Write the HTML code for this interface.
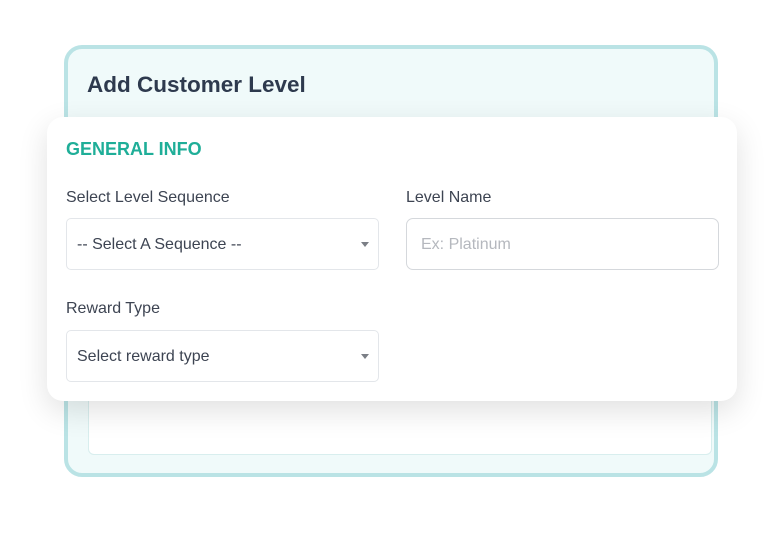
<!DOCTYPE html>
<html><head><meta charset="utf-8"><style>
*{box-sizing:border-box;margin:0;padding:0}
html,body{width:781px;height:541px;background:#fff;overflow:hidden;font-family:"Liberation Sans",sans-serif}
.outer{position:absolute;left:64px;top:45px;width:654px;height:432px;border:4px solid #bae3e5;border-radius:18px;background:#f0fafa}
.inner{position:absolute;left:20px;top:70px;right:2px;bottom:18px;background:#fff;border:1px solid #d8eeee;border-radius:6px}
.title{position:absolute;left:87px;top:72px;font-size:22.5px;font-weight:bold;color:#2e3a4e}
.card{position:absolute;left:47px;top:117px;width:690px;height:284px;background:#fff;border-radius:16px;box-shadow:0 10px 30px rgba(0,0,0,0.12)}
.gi{position:absolute;left:66px;top:139px;font-size:18px;font-weight:bold;color:#1fae98}
.lbl{position:absolute;font-size:16px;color:#3d4452}
.box{position:absolute;height:52px;border:1px solid #e3e6ea;border-radius:5px;background:#fff;font-size:16px;color:#3d4452;padding-left:10px;line-height:52px}
.box.in{border-color:#d5d8dc;color:#b5b8be;padding-left:14px;border-radius:7px}
.arr{position:absolute;right:9px;top:23px;width:0;height:0;border-left:4.5px solid transparent;border-right:4.5px solid transparent;border-top:5px solid #7b7f86}
</style></head><body>
<div class="outer"><div class="inner"></div></div>
<div class="title">Add Customer Level</div>
<div class="card"></div>
<div class="gi">GENERAL INFO</div>
<div class="lbl" style="left:66px;top:189px">Select Level Sequence</div>
<div class="lbl" style="left:406px;top:189px">Level Name</div>
<div class="box" style="left:66px;top:218px;width:313px">-- Select A Sequence --<span class="arr"></span></div>
<div class="box in" style="left:406px;top:218px;width:313px">Ex: Platinum</div>
<div class="lbl" style="left:66px;top:300px">Reward Type</div>
<div class="box" style="left:66px;top:330px;width:313px">Select reward type<span class="arr"></span></div>
</body></html>
